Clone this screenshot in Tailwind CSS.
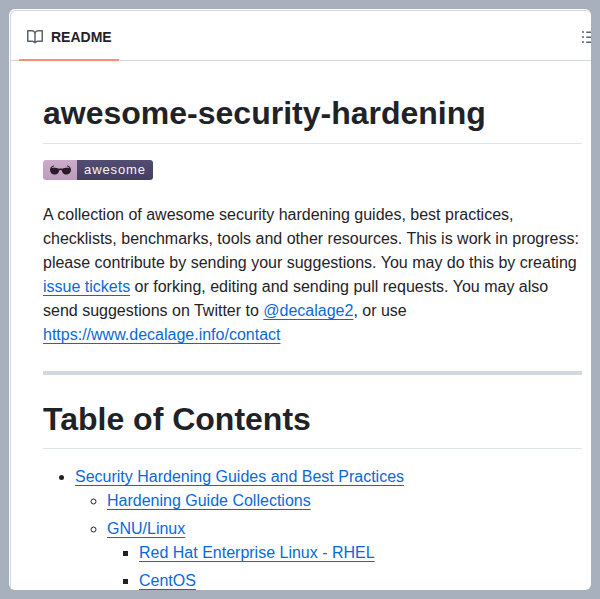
<!DOCTYPE html>
<html lang="en">
<head>
    <meta charset="UTF-8">
    <meta name="viewport" content="width=device-width, initial-scale=1.0">
    <title>README</title>
    <script src="https://cdn.jsdelivr.net/npm/@tailwindcss/browser@4"></script>
</head>
<body class="bg-[#a9b0bd] h-[599px] w-[600px] overflow-hidden font-['Liberation_Sans',Arial,sans-serif] text-[#1f2328]">
    <div class="ml-[9px] mt-[9px] w-[582px] h-[581px] bg-white rounded-[6px] overflow-hidden pl-px pt-px">
    <div class="h-[600px] border-t border-l border-[#d1d9e0] rounded-tl-[6px] rounded-tr-[6px]">
        <!-- tab bar -->
        <div class="h-[50px] border-b border-[#d1d9e0] relative">
            <div class="ml-[8px] w-[100px] h-[50px] border-b-2 border-[#fd8c73] flex items-center pl-[8px] pt-[3px] gap-2">
                <svg class="w-4 h-4 text-[#59636e]" viewBox="0 0 16 16" fill="currentColor"><path d="M0 1.75A.75.75 0 0 1 .75 1h4.253c1.227 0 2.317.59 3 1.501A3.743 3.743 0 0 1 11.006 1h4.245a.75.75 0 0 1 .75.75v10.5a.75.75 0 0 1-.75.75h-4.507a2.25 2.25 0 0 0-1.591.659l-.622.621a.75.75 0 0 1-1.06 0l-.622-.621A2.25 2.25 0 0 0 5.258 13H.75a.75.75 0 0 1-.75-.75Zm7.251 10.324.004-5.073-.002-2.253A2.25 2.25 0 0 0 5.003 2.5H1.5v9h3.757a3.75 3.75 0 0 1 1.994.574ZM8.755 4.75l-.004 7.322a3.752 3.752 0 0 1 1.992-.572H14.5v-9h-3.495a2.25 2.25 0 0 0-2.25 2.25Z"/></svg>
                <span class="text-sm font-bold leading-none">README</span>
            </div>
            <svg class="w-4 h-4 absolute left-[570px] top-[18px] text-[#59636e]" viewBox="0 0 16 16" fill="currentColor"><path d="M5.75 2.5h8.5a.75.75 0 0 1 0 1.5h-8.5a.75.75 0 0 1 0-1.5Zm0 5h8.5a.75.75 0 0 1 0 1.5h-8.5a.75.75 0 0 1 0-1.5Zm0 5h8.5a.75.75 0 0 1 0 1.5h-8.5a.75.75 0 0 1 0-1.5ZM2 14a1 1 0 1 1 0-2 1 1 0 0 1 0 2Zm1-6a1 1 0 1 1-2 0 1 1 0 0 1 2 0ZM2 4a1 1 0 1 1 0-2 1 1 0 0 1 0 2Z"/></svg>
        </div>
        <!-- article -->
        <div class="pl-[32px] pr-[9px] pt-[32px] text-base leading-6">
            <h1 class="text-[32px] font-bold leading-[40px] pb-[10px] border-b border-[#d1d9e0]/70 mb-4">awesome-security-hardening</h1>
            <div class="h-5 w-[110px] flex rounded-[3px] overflow-hidden mb-[23px]">
                <div class="w-[34px] bg-linear-to-b from-[#cbabca] to-[#bd9bbc] flex items-center justify-center">
                    <svg class="w-[21px] h-[10px]" viewBox="0 0 21 10" fill="#2a1a2a"><path d="M0 4.5 C0.5 1.5 2.5 0.5 4 0.5 L4 1.5 C3 1.5 2 2 1.6 3 C4 2.6 7 2.8 8.6 3.8 C9.8 3.4 11.2 3.4 12.4 3.8 C14 2.8 17 2.6 19.4 3 C19 2 18 1.5 17 1.5 L17 0.5 C18.5 0.5 20.5 1.5 21 4.5 C21 7.5 19 9.5 16 9.5 C13.5 9.5 12 7.5 11.8 5.4 C11 5 10 5 9.2 5.4 C9 7.5 7.5 9.5 5 9.5 C2 9.5 0 7.5 0 4.5 Z"/></svg>
                </div>
                <div class="flex-1 bg-linear-to-b from-[#534d72] to-[#443e60] flex items-center justify-center pb-[2px] text-[#f4f4f4] text-[13px] tracking-[0.9px] leading-none">awesome</div>
            </div>
            <p class="mb-6">A collection of awesome security hardening guides, best practices, checklists, benchmarks, tools and other resources. This is work in progress: please contribute by sending your suggestions. You may do this by creating <a class="text-[#0969da] underline underline-offset-[3px]" href="#">issue tickets</a> or forking, editing and sending pull requests. You may also send suggestions on Twitter to <a class="text-[#0969da] underline underline-offset-[3px]" href="#">@decalage2</a>, or use <a class="text-[#0969da] underline underline-offset-[3px]" href="#">https://www.decalage.info/contact</a></p>
            <div class="h-1 bg-[#d1d9e0] mb-6"></div>
            <h1 class="text-[32px] font-bold leading-[40px] pb-[9px] border-b border-[#d1d9e0]/70 mb-4">Table of Contents</h1>
            <ul class="list-disc pl-8">
                <li><a class="text-[#0969da] underline underline-offset-[3px]" href="#">Security Hardening Guides and Best Practices</a>
                    <ul class="list-[circle] pl-8">
                        <li><a class="text-[#0969da] underline underline-offset-[3px]" href="#">Hardening Guide Collections</a></li>
                        <li class="mt-1"><a class="text-[#0969da] underline underline-offset-[3px]" href="#">GNU/Linux</a>
                            <ul class="list-[square] pl-8">
                                <li><a class="text-[#0969da] underline underline-offset-[3px]" href="#">Red Hat Enterprise Linux - RHEL</a></li>
                                <li class="mt-1"><a class="text-[#0969da] underline underline-offset-[3px]" href="#">CentOS</a></li>
                            </ul>
                        </li>
                    </ul>
                </li>
            </ul>
        </div>
    </div>
    </div>
</body>
</html>
